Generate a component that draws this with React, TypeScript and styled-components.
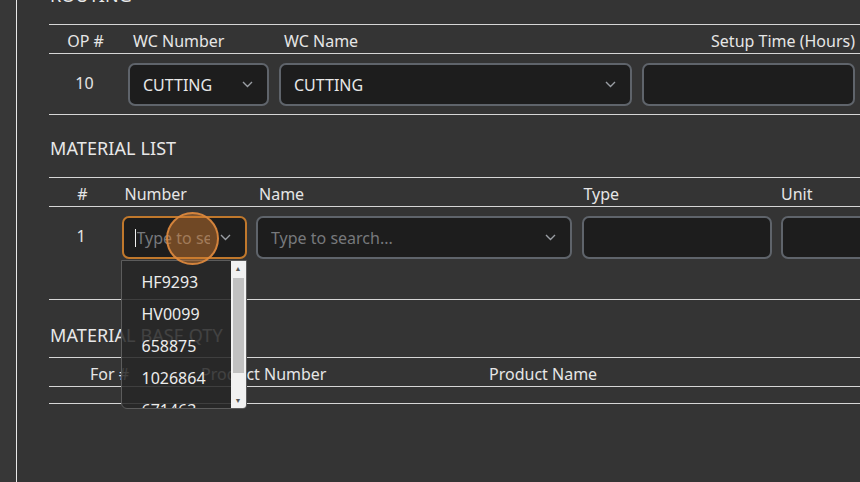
import styled, { createGlobalStyle } from "styled-components";

const GlobalStyle = createGlobalStyle`
  html, body {
    margin: 0;
    padding: 0;
    background: #343434;
    overflow: hidden;
  }
  body {
    font-family: "Noto Sans", "Open Sans", sans-serif;
    color: #e4e4e4;
  }
`;

const Chevron = () => (
  <svg width="11" height="7" viewBox="0 0 11 7" fill="none">
    <path d="M1 1l4.5 4.5L10 1" stroke="#9a9ea4" strokeWidth="1.4" />
  </svg>
);

const materialOptions = ["HF9293", "HV0099", "658875", "1026864", "671463"];

const App = () => {
  return (
    <>
      <GlobalStyle />
      <Page>
        <Gutter />
        <Panel>
          {/* ROUTING */}
          <Heading $gap={17}>ROUTING</Heading>
          <Table>
            <HeaderRow $cols="69px 141px 353px 213px 200px" $gap={10}>
              <HeadCell $center $pad={4}>OP #</HeadCell>
              <HeadCell $pad={5}>WC Number</HeadCell>
              <HeadCell $pad={5}>WC Name</HeadCell>
              <HeadCell $right>Setup Time (Hours)</HeadCell>
              <HeadCell />
            </HeaderRow>
            <BodyRow
              $cols="69px 141px 353px 213px 200px"
              $gap={10}
              $top={9}
              $bottom={8}
            >
              <NumCell $pad={2}>10</NumCell>
              <Select>
                <SelectText>CUTTING</SelectText>
                <Chevron />
              </Select>
              <Select>
                <SelectText>CUTTING</SelectText>
                <Chevron />
              </Select>
              <Field />
              <Field />
            </BodyRow>
          </Table>

          {/* MATERIAL LIST */}
          <Heading $gap={17} $top={21}>MATERIAL LIST</Heading>
          <Table>
            <HeaderRow $cols="63px 125px 316px 190px 200px" $gap={9.5}>
              <HeadCell $center $pad={4}>#</HeadCell>
              <HeadCell $pad={3}>Number</HeadCell>
              <HeadCell $pad={3}>Name</HeadCell>
              <HeadCell $pad={2}>Type</HeadCell>
              <HeadCell>Unit</HeadCell>
            </HeaderRow>
            <BodyRow
              $cols="63px 125px 316px 190px 200px"
              $gap={9.5}
              $top={9}
              $bottom={40}
            >
              <NumCell $pad={1}>1</NumCell>
              <ComboCell>
                <Select $focused>
                  <Caret />
                  <Placeholder>Type to search...</Placeholder>
                  <Chevron />
                </Select>
                <ListBox>
                  <Options>
                    {materialOptions.map((opt) => (
                      <Option key={opt}>{opt}</Option>
                    ))}
                  </Options>
                  <ScrollBar>
                    <ScrollArrow>▲</ScrollArrow>
                    <ScrollTrack>
                      <ScrollThumb />
                    </ScrollTrack>
                    <ScrollArrow>▼</ScrollArrow>
                  </ScrollBar>
                </ListBox>
                <ClickRing />
              </ComboCell>
              <Select>
                <Placeholder>Type to search...</Placeholder>
                <Chevron />
              </Select>
              <Field />
              <Field />
            </BodyRow>
          </Table>

          {/* MATERIAL BASE QTY */}
          <Heading $gap={10} $top={23}>MATERIAL BASE QTY</Heading>
          <Table>
            <HeaderRow $cols="80px 290px 400px" $gap={0}>
              <HeadCell $right>For #</HeadCell>
              <HeadCell $pad={72}>Product Number</HeadCell>
              <HeadCell $pad={70}>Product Name</HeadCell>
            </HeaderRow>
            <EmptyBody />
          </Table>
        </Panel>
      </Page>
    </>
  );
};

export default App;

const Page = styled.div`
  display: flex;
  width: 1100px;
  height: 482px;
`;

const Gutter = styled.div`
  width: 16px;
  flex-shrink: 0;
  background: #373737;
  border-right: 1px solid #e8e8e8;
`;

const Panel = styled.div`
  flex: 1;
  display: flex;
  flex-direction: column;
  margin-top: -17px;
  padding-left: 32px;
`;

const Heading = styled.h2<{ $gap: number; $top?: number }>`
  margin: ${({ $top }) => $top ?? 0}px 0 ${({ $gap }) => $gap}px 1px;
  font-size: 18px;
  font-weight: 400;
  line-height: 24px;
  color: #e8e8e8;
  letter-spacing: 0.1px;
`;

const Table = styled.div`
  display: flex;
  flex-direction: column;
  border-top: 1px solid #d6d6d6;
`;

const HeaderRow = styled.div<{ $cols: string; $gap: number }>`
  display: grid;
  grid-template-columns: ${({ $cols }) => $cols};
  column-gap: ${({ $gap }) => $gap}px;
  padding-top: 4px;
  height: 24px;
  border-bottom: 1px solid #d6d6d6;
`;

const HeadCell = styled.div<{ $center?: boolean; $right?: boolean; $pad?: number }>`
  font-size: 16px;
  line-height: 24px;
  color: #e6e6e6;
  white-space: nowrap;
  padding-left: ${({ $pad }) => $pad ?? 0}px;
  text-align: ${({ $center, $right }) =>
    $center ? "center" : $right ? "right" : "left"};
`;

const BodyRow = styled.div<{
  $cols: string;
  $gap: number;
  $top: number;
  $bottom: number;
}>`
  display: grid;
  grid-template-columns: ${({ $cols }) => $cols};
  column-gap: ${({ $gap }) => $gap}px;
  align-items: start;
  padding: ${({ $top }) => $top}px 0 ${({ $bottom }) => $bottom}px;
  border-bottom: 1px solid #d6d6d6;
`;

const NumCell = styled.div<{ $pad?: number }>`
  height: 40px;
  display: flex;
  align-items: center;
  justify-content: center;
  padding-left: ${({ $pad }) => $pad ?? 0}px;
  font-size: 16px;
  color: #e4e4e4;
`;

const Select = styled.div<{ $focused?: boolean }>`
  position: relative;
  box-sizing: border-box;
  height: 43px;
  display: flex;
  align-items: center;
  justify-content: space-between;
  padding: 0 14px 0 13px;
  background: #1d1d1d;
  border: 2px solid ${({ $focused }) => ($focused ? "#c0782c" : "#5f646b")};
  border-radius: 7px;
  overflow: hidden;
`;

const SelectText = styled.span`
  font-size: 16px;
  color: #e8e8e8;
`;

const Placeholder = styled.span`
  flex: 1;
  min-width: 0;
  font-size: 16px;
  color: #77797c;
  white-space: nowrap;
  overflow: hidden;
  margin-right: 10px;
`;

const Caret = styled.span`
  position: absolute;
  left: 11px;
  top: 11px;
  width: 1px;
  height: 18px;
  background: #f0f0f0;
`;

const Field = styled.div`
  box-sizing: border-box;
  height: 43px;
  background: #1d1d1d;
  border: 2px solid #5f646b;
  border-radius: 7px;
`;

const ComboCell = styled.div`
  position: relative;
`;

const ListBox = styled.div`
  position: absolute;
  top: 44px;
  left: -1px;
  width: 126px;
  height: 149px;
  display: flex;
  box-sizing: border-box;
  background: rgba(38, 38, 38, 0.86);
  border: 1px solid #5c5c5c;
  border-radius: 0 0 4px 6px;
  z-index: 5;
  overflow: hidden;
`;

const Options = styled.div`
  flex: 1;
  padding-top: 5px;
  overflow: hidden;
`;

const Option = styled.div`
  height: 32px;
  line-height: 32px;
  padding-left: 20px;
  font-size: 16px;
  color: #ececec;
`;

const ScrollBar = styled.div`
  width: 15px;
  display: flex;
  flex-direction: column;
  background: #f1f1f1;
`;

const ScrollArrow = styled.div`
  height: 15px;
  font-size: 7px;
  line-height: 15px;
  text-align: center;
  color: #555;
`;

const ScrollTrack = styled.div`
  flex: 1;
  padding: 2px 2px 0;
`;

const ScrollThumb = styled.div`
  height: 95px;
  background: #c1c1c1;
`;

const ClickRing = styled.div`
  position: absolute;
  left: 44px;
  top: -4px;
  width: 53px;
  height: 53px;
  box-sizing: border-box;
  border-radius: 50%;
  background: rgba(214, 126, 48, 0.45);
  border: 2px solid rgba(222, 138, 62, 0.9);
  z-index: 6;
  pointer-events: none;
`;

const EmptyBody = styled.div`
  height: 16px;
  border-bottom: 1px solid #d6d6d6;
`;
